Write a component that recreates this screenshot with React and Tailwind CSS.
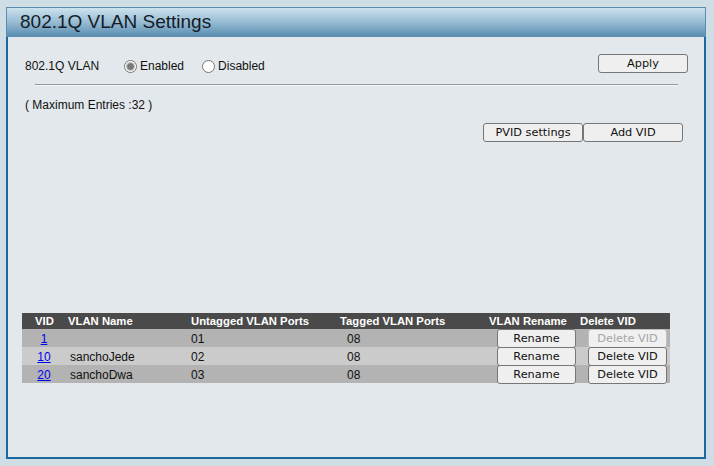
import React from "react"

const ROWS = [
  { vid: "1", name: "", untagged: "01", tagged: "08", canDelete: false },
  { vid: "10", name: "sanchoJede", untagged: "02", tagged: "08", canDelete: true },
  { vid: "20", name: "sanchoDwa", untagged: "03", tagged: "08", canDelete: true },
]

const COLS = "grid grid-cols-[44px_120px_150px_149px_92px_93px]"

function Btn({ children, className = "", disabled }) {
  return (
    <button
      className={`h-[19px] rounded-[3px] border text-[11.3px] leading-none font-['DejaVu_Sans',sans-serif] ${
        disabled
          ? "border-[#c0c0c0] bg-[#f0f0f0] text-[#a6a6a6]"
          : "border-[#767676] bg-[#efefef] text-[#111]"
      } ${className}`}
    >
      {children}
    </button>
  )
}

function Radio({ checked, label }) {
  return (
    <label className="flex items-center gap-[3px]">
      <span className="w-[13px] h-[13px] rounded-full border border-[#767676] bg-white flex items-center justify-center">
        {checked && <span className="w-[9px] h-[9px] rounded-full bg-[#7a7a7a] border-[1.5px] border-[#c8c8c8]" />}
      </span>
      <span>{label}</span>
    </label>
  )
}

export default function App() {
  return (
    <div className="w-[714px] h-[466px] bg-[#cfdde5] pt-[7px] pl-[6px] font-['Liberation_Sans',Arial,sans-serif] text-[#111]">
      <div className="w-[700px] h-[452px] bg-[#e2e8eb] border-2 border-t-0 border-[#1b69a0] flex flex-col">
        <div className="h-[30px] -mx-[2px] border border-[#5a8db0] bg-gradient-to-b from-[#cde2ee] via-[#98bcd3] to-[#5b8fb2] pl-[13px] text-[19px] leading-[28px] text-[#141c28]">
          802.1Q VLAN Settings
        </div>

        <div className="flex items-start mt-[17px] pl-[17px] pr-[16px] text-[12px]">
          <div className="flex items-center pt-[3px]">
            <span className="w-[99px]">802.1Q VLAN</span>
            <Radio checked label="Enabled" />
            <span className="w-[18px]" />
            <Radio label="Disabled" />
          </div>
          <Btn className="ml-auto w-[90px]">Apply</Btn>
        </div>

        <div className="mt-[9px] ml-[27px] mr-[26px] h-px bg-[#9a9a9a] border-b border-[#f4f4f4] box-content" />

        <div className="mt-[10px] pl-[17px] text-[12px]">( Maximum Entries :32 )</div>

        <div className="flex justify-end mt-[9px] pr-[21px]">
          <Btn className="w-[100px]">PVID settings</Btn>
          <Btn className="w-[100px]">Add VID</Btn>
        </div>

        <div className="mt-[171px] ml-[14px] w-[648px] text-[12px]">
          <div className={`${COLS} h-[16px] bg-[#4a4a4a] text-white font-bold text-[11.3px] leading-[16px]`}>
            <span className="pl-[13px]">VID</span>
            <span className="pl-[2px]">VLAN Name</span>
            <span className="pl-[5px]">Untagged VLAN Ports</span>
            <span className="pl-[4px]">Tagged VLAN Ports</span>
            <span className="pl-[4px]">VLAN Rename</span>
            <span className="pl-[3px]">Delete VID</span>
          </div>
          {ROWS.map((r, i) => (
            <div key={r.vid} className={`${COLS} h-[18px] items-center ${i % 2 ? "bg-[#cbcbcb]" : "bg-[#b3b3b3]"}`}>
              <span className="text-center"><a className="text-[#0000ee] underline">{r.vid}</a></span>
              <span className="pl-[4px]">{r.name}</span>
              <span className="pl-[5px]">{r.untagged}</span>
              <span className="pl-[11px]">{r.tagged}</span>
              <span className="pl-[12px]"><Btn className="w-[79px] h-[17px]">Rename</Btn></span>
              <span className="pl-[11px]"><Btn className="w-[79px] h-[17px]" disabled={!r.canDelete}>Delete VID</Btn></span>
            </div>
          ))}
        </div>
      </div>
    </div>
  )
}
